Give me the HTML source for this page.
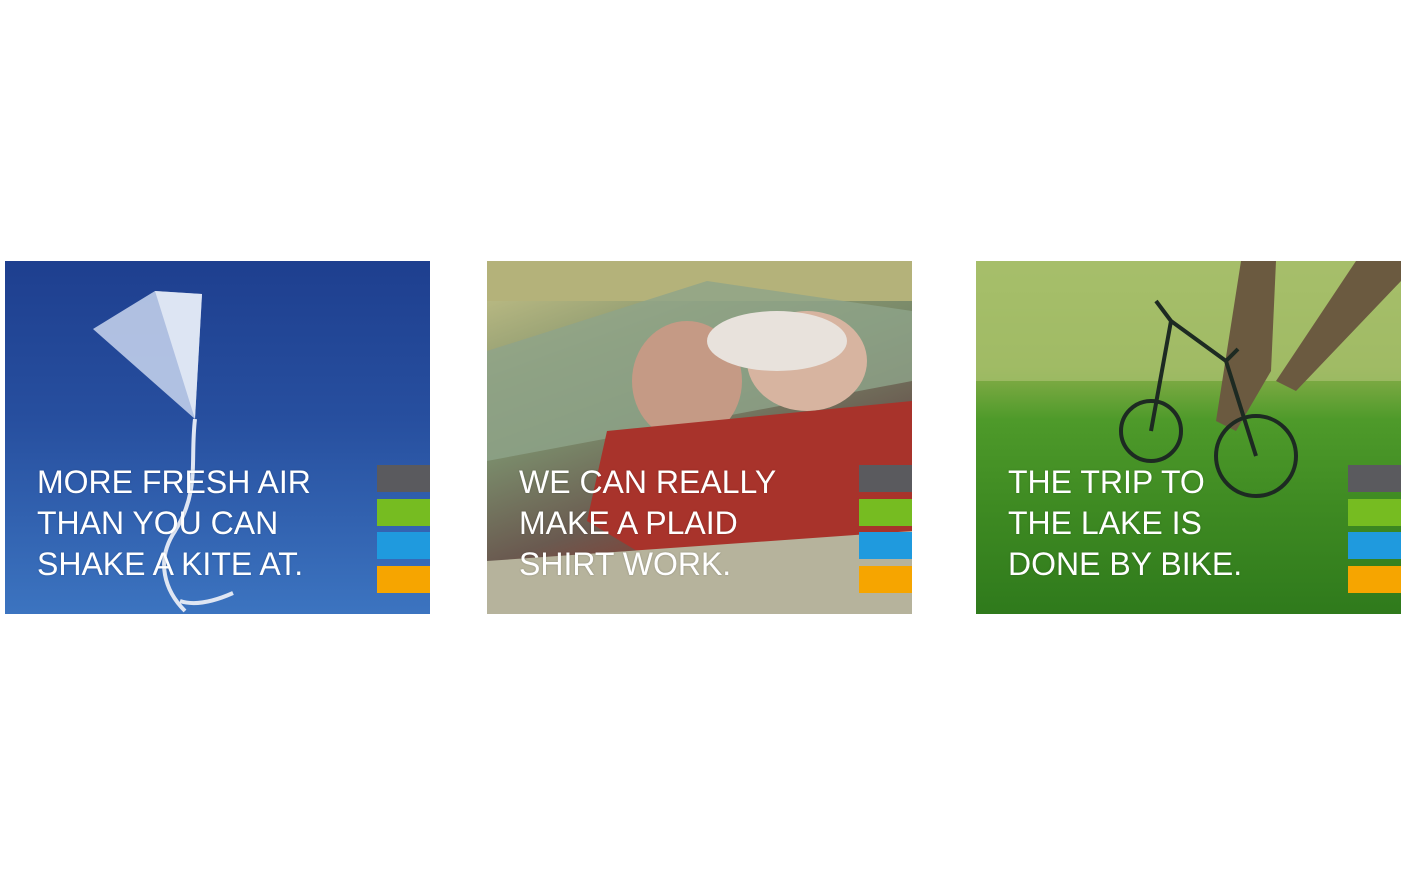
<!DOCTYPE html>
<html><head><meta charset="utf-8"><style>
html,body{margin:0;padding:0;background:#fff;width:1407px;height:875px;overflow:hidden}
.p{position:absolute;top:261px;width:425px;height:353px;overflow:hidden}
.t{position:absolute;left:32px;top:201px;color:#fff;font-family:"Liberation Sans",sans-serif;font-size:32px;line-height:41px;letter-spacing:0;font-weight:normal;text-shadow:0 0 2px rgba(0,0,0,.2)}
.b{position:absolute;right:0;width:53px;height:27px}
</style></head><body>
<div class="p" style="left:5px;background:linear-gradient(180deg,#1e3f8f 0%,#274f9f 45%,#3c74c0 100%)">
<svg width="425" height="353" style="position:absolute;left:0;top:0">
<polygon points="88,68 150,30 197,33 190,158" fill="#c9d6ee" opacity=".85"/>
<polygon points="150,30 197,33 190,158" fill="#e8eef8" opacity=".8"/>
<path d="M190,158 C185,200 195,230 170,270 C150,300 160,330 180,350 M175,340 C190,345 210,340 228,332" stroke="#dfe6f3" stroke-width="4" fill="none"/>
</svg>
<div class="t">MORE FRESH AIR<br>THAN YOU CAN<br>SHAKE A KITE AT.</div>
<div class="b" style="top:204px;background:#5a5a5e"></div><div class="b" style="top:238px;background:#76bc21"></div><div class="b" style="top:271px;background:#1f9ade"></div><div class="b" style="top:305px;background:#f6a500"></div>
</div>
<div class="p" style="left:487px;background:linear-gradient(160deg,#c9c58a 0%,#8e9a70 25%,#7a8a6a 40%,#6a5a50 60%,#8a3a30 75%,#a2a08a 100%)">
<svg width="425" height="353" style="position:absolute;left:0;top:0">
<rect x="0" y="0" width="425" height="40" fill="#b4b27a"/>
<polygon points="0,90 220,20 425,50 425,120 0,200" fill="#8fa48a" opacity=".8"/>
<ellipse cx="200" cy="120" rx="55" ry="60" fill="#c59a85"/>
<ellipse cx="320" cy="100" rx="60" ry="50" fill="#d7b4a0"/>
<ellipse cx="290" cy="80" rx="70" ry="30" fill="#e8e2dc"/>
<polygon points="120,170 425,140 425,280 200,320 100,260" fill="#a8332b"/>
<polygon points="0,300 425,270 425,353 0,353" fill="#b6b39c"/>
</svg>
<div class="t">WE CAN REALLY<br>MAKE A PLAID<br>SHIRT WORK.</div>
<div class="b" style="top:204px;background:#5a5a5e"></div><div class="b" style="top:238px;background:#76bc21"></div><div class="b" style="top:271px;background:#1f9ade"></div><div class="b" style="top:305px;background:#f6a500"></div>
</div>
<div class="p" style="left:976px;background:linear-gradient(180deg,#9fba5c 0%,#8aae4a 30%,#4e9a2a 45%,#3e8a22 70%,#2f7a1c 100%)">
<svg width="425" height="353" style="position:absolute;left:0;top:0">
<rect x="0" y="0" width="425" height="120" fill="#a9c070" opacity=".7"/>
<path d="M265,0 L300,0 L295,110 L260,170 L240,160 Z" fill="#6b5a40"/>
<path d="M380,0 L425,0 L425,20 L320,130 L300,120 Z" fill="#6b5a40"/>
<g stroke="#1d2a22" stroke-width="4" fill="none"><circle cx="175" cy="170" r="30"/><circle cx="280" cy="195" r="40"/><path d="M175,170 L195,60 L250,100 L280,195 M195,60 L180,40 M250,100 L262,88"/></g>
</svg>
<div class="t">THE TRIP TO<br>THE LAKE IS<br>DONE BY BIKE.</div>
<div class="b" style="top:204px;background:#5a5a5e"></div><div class="b" style="top:238px;background:#76bc21"></div><div class="b" style="top:271px;background:#1f9ade"></div><div class="b" style="top:305px;background:#f6a500"></div>
</div>
</body></html>
